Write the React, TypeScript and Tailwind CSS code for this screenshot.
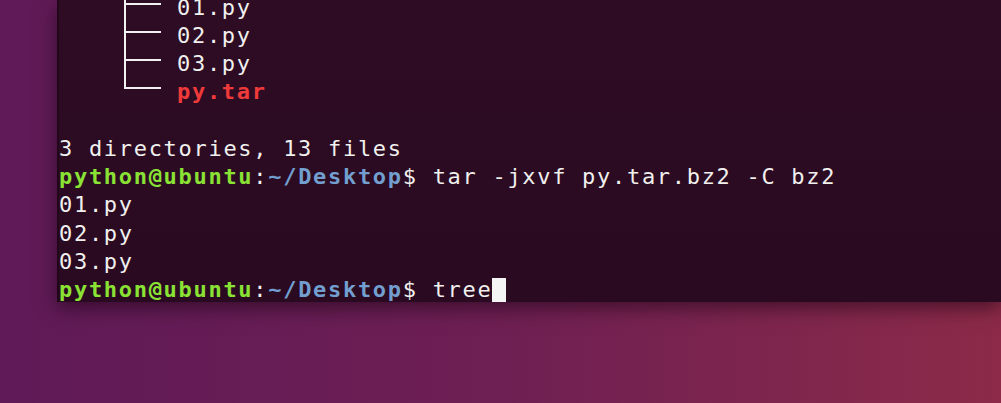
import React from 'react';

type Seg = { t: string; c?: string };

const GREEN = 'text-[#8ae234] font-bold';
const BLUE = 'text-[#729fcf] font-bold';

const TreeBranch = ({ last }: { last?: boolean }) => (
    <svg width="118" height="29" viewBox="0 0 118 29" className="shrink-0 -my-[1px] overflow-visible">
        <line x1="66" y1="-1" x2="66" y2={last ? 11 : 30} stroke="#f2f2f2" strokeWidth="2" />
        <line x1="65" y1="11" x2="102" y2="11" stroke="#f2f2f2" strokeWidth="2" />
    </svg>
);

const Prompt = ({ cmd }: { cmd: string }) => (
    <div className="h-[28.25px] flex items-center whitespace-pre">
        <span className={GREEN}>python@ubuntu</span>
        <span>:</span>
        <span className={BLUE}>~/Desktop</span>
        <span>$ {cmd}</span>
    </div>
);

const Line = ({ segs }: { segs: Seg[] }) => (
    <div className="h-[28.25px] flex items-center whitespace-pre">
        {segs.map((s, i) => (
            <span key={i} className={s.c}>{s.t}</span>
        ))}
    </div>
);

export default function App() {
    const tree = [
        { name: '01.py' },
        { name: '02.py' },
        { name: '03.py' },
        { name: 'py.tar', red: true, last: true },
    ];

    return (
        <div className="w-[1001px] h-[403px] overflow-hidden bg-linear-to-r from-[#5f1a57] via-[#6e1f53] to-[#8c2a48]">
            {/* terminal window, runs off the right edge */}
            <div className="ml-[57px] h-[302px] bg-linear-to-b from-[#2d0c24] to-[#2a0a21] border-l-2 border-[#22071b] shadow-[0_6px_18px_rgba(20,0,15,0.55)] overflow-hidden">
                <div
                    className="-mt-[7px] text-[22px] tracking-[1.7px] text-[#f0f0ee]"
                    style={{ fontFamily: '"DejaVu Sans Mono", "Liberation Mono", monospace' }}
                >
                    {tree.map((f) => (
                        <div key={f.name} className="h-[28.25px] flex items-center whitespace-pre">
                            <TreeBranch last={f.last} />
                            <span className={f.red ? 'text-[#f03a3a] font-bold' : ''}>{f.name}</span>
                        </div>
                    ))}
                    <div className="h-[28.25px]" />
                    <Line segs={[{ t: '3 directories, 13 files' }]} />
                    <Prompt cmd="tar -jxvf py.tar.bz2 -C bz2" />
                    <Line segs={[{ t: '01.py' }]} />
                    <Line segs={[{ t: '02.py' }]} />
                    <Line segs={[{ t: '03.py' }]} />
                    <div className="h-[28.25px] flex items-center whitespace-pre">
                        <span className={GREEN}>python@ubuntu</span>
                        <span>:</span>
                        <span className={BLUE}>~/Desktop</span>
                        <span>$ tree</span>
                        <span className="inline-block w-[14px] h-[24px] bg-[#f4f4f4]" />
                    </div>
                </div>
            </div>
        </div>
    );
}
